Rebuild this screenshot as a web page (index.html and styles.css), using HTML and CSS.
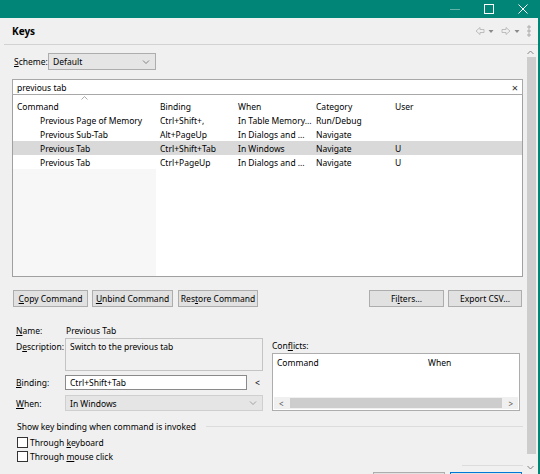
FILE: index.html
```html
<!DOCTYPE html>
<html>
<head>
<meta charset="utf-8">
<link rel="stylesheet" href="styles.css">
</head>
<body>
<div class="titlebar">
  <div class="tb-btn"><svg width="10" height="10" viewBox="0 0 10 10"><line x1="0" y1="5.5" x2="10" y2="5.5" stroke="#5fb3a8" stroke-width="1"/></svg></div>
  <div class="tb-btn"><svg width="10" height="10" viewBox="0 0 10 10"><rect x="0.5" y="0.5" width="9" height="9" fill="none" stroke="#fff" stroke-width="1"/></svg></div>
  <div class="tb-btn"><svg width="10" height="10" viewBox="0 0 10 10"><path d="M0.5 0.5 L9.5 9.5 M9.5 0.5 L0.5 9.5" stroke="#fff" stroke-width="1"/></svg></div>
</div>
<div class="frame">
  <div class="main">
    <div class="header">
      <span class="title">Keys</span>
      <div class="tools">
        <svg width="10" height="10" viewBox="0 0 10 10"><path d="M1 5 L5 1.5 V3.5 H9 V6.5 H5 V8.5 Z" fill="none" stroke="#b8b8b8" stroke-width="0.9"/></svg>
        <svg width="6" height="10" viewBox="0 0 6 10"><path d="M0.5 4 H5.5 L3 7 Z" fill="#8a8a8a"/></svg>
        <svg width="10" height="10" viewBox="0 0 10 10"><path d="M9 5 L5 1.5 V3.5 H1 V6.5 H5 V8.5 Z" fill="none" stroke="#b8b8b8" stroke-width="0.9"/></svg>
        <svg width="6" height="10" viewBox="0 0 6 10"><path d="M0.5 4 H5.5 L3 7 Z" fill="#8a8a8a"/></svg>
        <svg width="4" height="12" viewBox="0 0 4 12"><circle cx="2" cy="2" r="1.2" fill="none" stroke="#8a8a8a" stroke-width="0.7"/><circle cx="2" cy="6" r="1.2" fill="none" stroke="#8a8a8a" stroke-width="0.7"/><circle cx="2" cy="10" r="1.2" fill="none" stroke="#8a8a8a" stroke-width="0.7"/></svg>
      </div>
    </div>
    <div class="body">
      <div class="page">
        <div class="scheme-row">
          <span class="scheme-label"><u>S</u>cheme:</span>
          <div class="combo scheme-combo"><span>Default</span>
            <svg width="8" height="6" viewBox="0 0 8 6"><path d="M1 1.5 L4 4.5 L7 1.5" fill="none" stroke="#777" stroke-width="0.9"/></svg>
          </div>
        </div>
        <div class="search"><span>previous tab</span><span class="clear">×</span></div>
        <div class="table">
          <div class="trow thead">
            <div class="c1">Command<svg class="sort" width="7" height="4" viewBox="0 0 7 4"><path d="M0.5 3.5 L3.5 0.5 L6.5 3.5" fill="none" stroke="#999" stroke-width="0.8"/></svg></div>
            <div class="c2">Binding</div><div class="c3">When</div><div class="c4">Category</div><div class="c5">User</div>
          </div>
          <div class="trow">
            <div class="c1 cmd">Previous Page of Memory</div><div class="c2">Ctrl+Shift+,</div><div class="c3">In Table Memory...</div><div class="c4">Run/Debug</div><div class="c5"></div>
          </div>
          <div class="trow">
            <div class="c1 cmd">Previous Sub-Tab</div><div class="c2">Alt+PageUp</div><div class="c3">In Dialogs and ...</div><div class="c4">Navigate</div><div class="c5"></div>
          </div>
          <div class="trow selected">
            <div class="c1 cmd">Previous Tab</div><div class="c2">Ctrl+Shift+Tab</div><div class="c3">In Windows</div><div class="c4">Navigate</div><div class="c5">U</div>
          </div>
          <div class="trow">
            <div class="c1 cmd">Previous Tab</div><div class="c2">Ctrl+PageUp</div><div class="c3">In Dialogs and ...</div><div class="c4">Navigate</div><div class="c5">U</div>
          </div>
          <div class="blank"><div class="blank-c1"></div><div class="blank-rest"></div></div>
        </div>
        <div class="buttons">
          <div class="btn b-copy"><u>C</u>opy Command</div>
          <div class="btn b-unbind"><u>U</u>nbind Command</div>
          <div class="btn b-restore">Res<u>t</u>ore Command</div>
          <div class="spacer"></div>
          <div class="btn b-filters">Fi<u>l</u>ters...</div>
          <div class="btn b-export">Export CSV...</div>
        </div>
        <div class="details">
          <div class="left">
            <div class="frow name-row"><span class="lbl"><u>N</u>ame:</span><span class="val">Previous Tab</span></div>
            <div class="frow desc-row"><span class="lbl">D<u>e</u>scription:</span><div class="desc">Switch to the previous tab</div></div>
            <div class="frow bind-row"><span class="lbl"><u>B</u>inding:</span><div class="input">Ctrl+Shift+Tab</div><span class="lt">&lt;</span></div>
            <div class="frow when-row"><span class="lbl"><u>W</u>hen:</span><div class="combo when-combo"><span>In Windows</span>
              <svg width="8" height="6" viewBox="0 0 8 6"><path d="M1 1.5 L4 4.5 L7 1.5" fill="none" stroke="#999" stroke-width="0.9"/></svg></div></div>
          </div>
          <div class="right">
            <div class="conf-label">Con<u>f</u>licts:</div>
            <div class="conf-table">
              <div class="conf-head"><span class="ch1">Command</span><span class="ch2">When</span></div>
              <div class="conf-body"></div>
              <div class="hscroll"><span class="arr">&lt;</span><div class="hthumb"></div><span class="arr">&gt;</span></div>
            </div>
          </div>
        </div>
        <div class="group">
          <div class="legend"><span>Show key binding when command is invoked</span><div class="gline"></div></div>
          <div class="check first"><span class="box"></span><span>Through <u>k</u>eyboard</span></div>
          <div class="check"><span class="box"></span><span>Through <u>m</u>ouse click</span></div>
        </div>
        <div class="bottom-line"></div>
        <div class="bottom-buttons">
          <div class="btn bb1"></div>
          <div class="btn bb2"></div>
        </div>
      </div>
      <div class="vscroll">
        <svg class="varr" width="7" height="5" viewBox="0 0 7 5"><path d="M0.5 4 L3.5 1 L6.5 4" fill="none" stroke="#777" stroke-width="0.9"/></svg>
        <div class="vthumb"></div>
        <svg class="varr down" width="7" height="5" viewBox="0 0 7 5"><path d="M0.5 1 L3.5 4 L6.5 1" fill="none" stroke="#777" stroke-width="0.9"/></svg>
      </div>
    </div>
  </div>
</div>
</body>
</html>
```
FILE: styles.css
```css
* { box-sizing: border-box; }
html, body { margin: 0; padding: 0; }
body {
  width: 540px; height: 474px; overflow: hidden;
  background: #f0f0f0;
  font-family: "Noto Sans", "DejaVu Sans", sans-serif;
  font-size: 8.5px; color: #000;
}
u { text-decoration: underline; text-underline-offset: 1px; }

.titlebar { height: 18px; background: #008577; display: flex; justify-content: flex-end; }
.tb-btn { width: 34px; height: 18px; display: flex; align-items: center; justify-content: center; }

.frame { display: flex; height: 456px; border-right: 2px solid #008577; }
.main { flex: 1; display: flex; flex-direction: column; min-width: 0; }

.header {
  height: 27px; margin-left: 4px; padding-left: 8px; padding-right: 7px; flex: none;
  display: flex; align-items: center; justify-content: space-between;
  border-bottom: 1px solid #d2d2d2;
}
.title { font-weight: bold; font-size: 10px; }
.tools { display: flex; align-items: center; gap: 3px; }
.tools svg:nth-child(2), .tools svg:nth-child(4) { margin-right: 4px; }

.body { flex: 1; display: flex; min-height: 0; }
.page { width: 523px; padding-left: 12px; display: flex; flex-direction: column; overflow: hidden; flex: none; }
.page > * { flex: none; }

.scheme-row { margin-top: 8px; height: 17px; display: flex; align-items: center; }
.scheme-label { width: 36px; padding-left: 2px; }
.combo {
  display: flex; align-items: center; justify-content: space-between;
  background: #e5e5e5; border: 1px solid #adadad; padding: 0 5px 0 4px;
}
.scheme-combo { width: 108px; height: 17px; }

.search {
  margin-top: 9px; height: 16px; background: #fff; border: 1px solid #a8a8a8;
  display: flex; align-items: center; justify-content: space-between; padding: 0 4px;
}
.clear { font-size: 11px; color: #333; line-height: 1; }

.table { height: 182px; border: 1px solid #a0a0a0; border-top: none; background: #fff; display: flex; flex-direction: column; }
.trow { display: flex; height: 14px; align-items: center; flex: none; }
.thead { height: 18px; padding-top: 4px; }
.trow > div { padding-left: 4px; white-space: nowrap; overflow: hidden; }
.c1 { width: 143px; position: relative; }
.c2 { width: 78px; }
.c3 { width: 78px; }
.c4 { width: 79px; }
.c5 { flex: 1; }
.cmd { padding-left: 27px !important; }
.selected { background: #d9d9d9; }
.sort { position: absolute; left: 68px; top: -5px; }
.thead .c1 { overflow: visible; }
.blank { flex: 1; display: flex; }
.blank-c1 { width: 143px; background: #f7f7f7; }
.blank-rest { flex: 1; }

.buttons { margin-top: 13px; height: 17px; display: flex; }
.btn {
  height: 17px; background: #e1e1e1; border: 1px solid #adadad;
  display: flex; align-items: center; justify-content: center; white-space: nowrap;
}
.b-copy { width: 75px; margin-left: 1px; }
.b-unbind { width: 81px; margin-left: 4px; }
.b-restore { width: 80px; margin-left: 5px; }
.spacer { flex: 1; }
.b-filters { width: 75px; }
.b-export { width: 74px; margin-left: 4px; margin-right: 1px; }

.details { margin-top: 17px; display: flex; }
.left { width: 251px; padding-left: 4px; display: flex; flex-direction: column; }
.frow { display: flex; }
.lbl { width: 49px; flex: none; }
.name-row { height: 12px; align-items: center; }
.val { padding-left: 1px; }
.desc-row { margin-top: 2px; }
.desc-row .lbl { padding-top: 3px; }
.desc { width: 198px; height: 33px; border: 1px solid #c4c4c4; padding: 2px 4px; }
.bind-row { margin-top: 4px; align-items: center; }
.input { width: 182px; height: 15px; background: #fff; border: 1px solid #8a8a8a; display: flex; align-items: center; padding-left: 4px; }
.lt { margin-left: 8px; }
.when-row { margin-top: 5px; align-items: center; }
.when-combo { width: 198px; height: 16px; border-color: #cfcfcf; }

.right { margin-left: 9px; width: 248px; display: flex; flex-direction: column; padding-top: 16px; }
.conf-label { height: 13px; }
.conf-table { height: 58px; background: #fff; border: 1px solid #adadad; display: flex; flex-direction: column; }
.conf-head { height: 16px; display: flex; align-items: center; padding-left: 4px; }
.ch1 { width: 151px; }
.conf-body { flex: 1; }
.hscroll { height: 12px; background: #f0f0f0; display: flex; align-items: center; padding: 0 5px; margin: 0 1px 1px; }
.hthumb { flex: 1; height: 10px; background: #cdcdcd; margin: 0 6px; }
.arr { color: #555; font-size: 8px; }

.group { margin-top: 9px; padding-left: 5px; display: flex; flex-direction: column; }
.legend { display: flex; align-items: center; height: 12px; }
.gline { flex: 1; height: 1px; background: #dcdcdc; margin-left: 10px; }
.check { display: flex; align-items: center; height: 14px; }
.check.first { margin-top: 3px; }
.box { width: 11px; height: 11px; border: 1px solid #333; background: #fff; margin-right: 2px; flex: none; }

.bottom-line { margin-top: 2px; height: 1px; background: #dcdcdc; margin-left: 450px; }
.bottom-buttons { margin-top: 6px; display: flex; justify-content: flex-end; gap: 5px; }
.bb1 { width: 72px; }
.bb2 { width: 72px; border-color: #0078d7; margin-right: 1px; }

.vscroll { width: 15px; display: flex; flex-direction: column; align-items: center; }
.varr { margin-top: 5px; flex: none; }
.vthumb { width: 9px; height: 397px; background: #cdcdcd; margin-top: 2px; margin-left: 1px; flex: none; }
.varr.down { margin-top: 11px; }
```
